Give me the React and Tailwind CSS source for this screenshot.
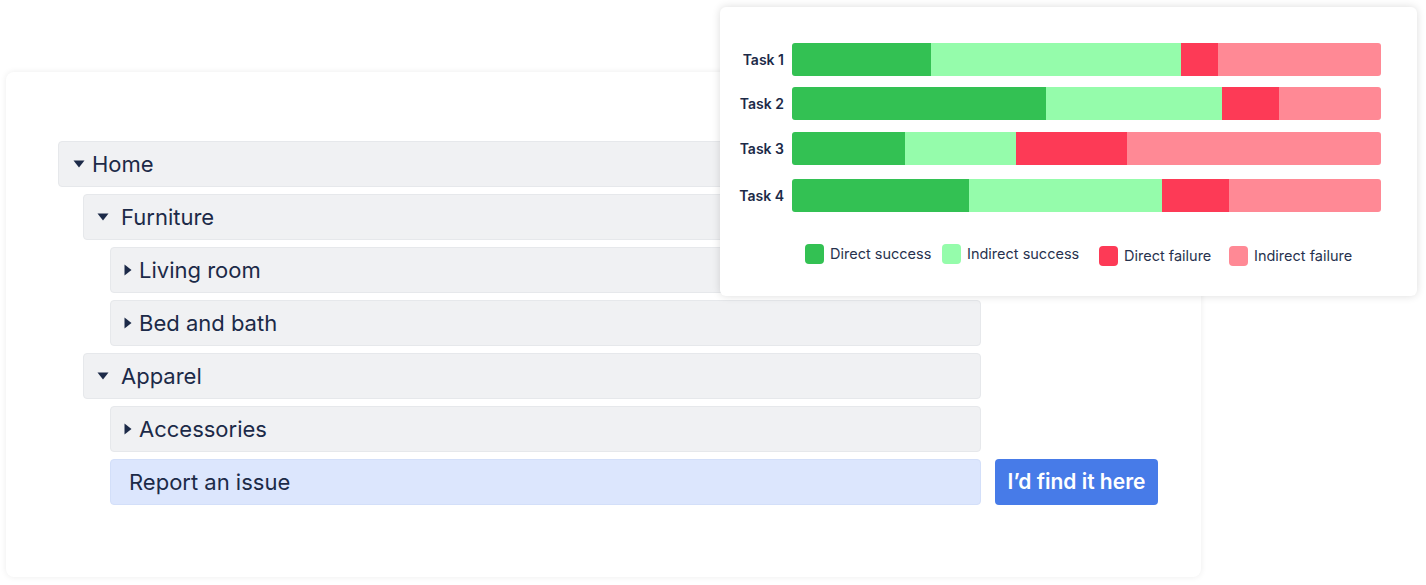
import React from "react";

const tasks = [
  { name: "Task 1", mt: "mt-0", seg: [139, 250, 37, 163] },
  { name: "Task 2", mt: "mt-[11px]", seg: [254, 176, 57, 102] },
  { name: "Task 3", mt: "mt-[12px]", seg: [113, 111, 111, 254] },
  { name: "Task 4", mt: "mt-[14px]", seg: [177, 193, 67, 152] },
];

const colors = ["bg-[#33c153]", "bg-[#95fcab]", "bg-[#fd3a56]", "bg-[#ff8995]"];

// fixed item widths keep the swatches where the reference has them
const legend = [
  { label: "Direct success", color: "bg-[#33c153]", cls: "w-[137px]" },
  { label: "Indirect success", color: "bg-[#95fcab]", cls: "w-[157px]" },
  { label: "Direct failure", color: "bg-[#fd3a56]", cls: "w-[130px] mt-[2px]" },
  { label: "Indirect failure", color: "bg-[#ff8995]", cls: "mt-[2px]" },
];

const Caret = ({ open }) =>
  open ? (
    <svg width="12" height="8" viewBox="0 0 12 8" className="shrink-0">
      <path d="M0.5 0.5 H11.5 L6 7.5 Z" fill="#1c2a48" />
    </svg>
  ) : (
    <svg width="8" height="12" viewBox="0 0 8 12" className="shrink-0">
      <path d="M0.5 0.5 V11.5 L7.5 6 Z" fill="#1c2a48" />
    </svg>
  );

const Row = ({ label, open, cls, pad, gap }) => (
  <div
    className={`flex items-center h-[46px] bg-[#f0f1f3] border border-[#e6e8eb] rounded-[4px] text-[22px] text-[#1c2a48] ${cls} ${pad}`}
  >
    <Caret open={open} />
    <span className={gap}>{label}</span>
  </div>
);

const ResultsChart = () => (
  <div className="absolute left-[720px] top-[7px] w-[697px] h-[289px] bg-white rounded-[6px] shadow-[0_0_8px_rgba(0,0,0,0.14)]">
    <div className="pt-[36px]">
      {tasks.map((t) => (
        <div key={t.name} className={`flex items-center ${t.mt}`}>
          <div className="w-[64px] text-right text-[14px] font-semibold text-[#1c2a48]">{t.name}</div>
          <div className="ml-[8px] flex h-[33px] w-[589px] rounded-[3px] overflow-hidden">
            {t.seg.map((w, i) => (
              <div key={i} className={`${colors[i]} h-full`} style={{ width: w }} />
            ))}
          </div>
        </div>
      ))}
    </div>
    <div className="flex items-start pl-[85px] mt-[31px]">
      {legend.map((l) => (
        <div key={l.label} className={`flex items-center shrink-0 ${l.cls}`}>
          <div className={`w-[19px] h-[20px] rounded-[4px] shrink-0 ${l.color}`} />
          <span className="ml-[6px] text-[14.5px] text-[#27324e] whitespace-nowrap">{l.label}</span>
        </div>
      ))}
    </div>
  </div>
);

export default function App() {
  return (
    <div
      className="relative w-[1426px] h-[585px] bg-white"
      style={{ fontFamily: "Inter, 'Noto Sans', sans-serif" }}
    >
      <div className="absolute left-[6px] top-[72px] w-[1195px] h-[505px] bg-white rounded-[8px] shadow-[0_0_6px_rgba(0,0,0,0.08)]">
        <div className="pl-[52px] pt-[69px] flex flex-col gap-[7px]">
          <Row label="Home" open cls="w-[923px]" pad="pl-[14px]" gap="ml-[7px]" />
          <Row label="Furniture" open cls="ml-[25px] w-[898px]" pad="pl-[13px]" gap="ml-[12px]" />
          <Row label="Living room" cls="ml-[52px] w-[871px]" pad="pl-[13px]" gap="ml-[7px]" />
          <Row label="Bed and bath" cls="ml-[52px] w-[871px]" pad="pl-[13px]" gap="ml-[7px]" />
          <Row label="Apparel" open cls="ml-[25px] w-[898px]" pad="pl-[13px]" gap="ml-[12px]" />
          <Row label="Accessories" cls="ml-[52px] w-[871px]" pad="pl-[13px]" gap="ml-[7px]" />
          <div className="flex ml-[52px]">
            <div className="flex items-center w-[871px] h-[46px] bg-[#dce6fd] border border-[#d3dff9] rounded-[4px] pl-[18px] text-[22px] text-[#1c2a48]">
              Report an issue
            </div>
            <button className="ml-[14px] w-[163px] h-[46px] rounded-[4px] bg-[#477be8] text-white text-[21px] font-semibold">
              I’d find it here
            </button>
          </div>
        </div>
      </div>
      <ResultsChart />
    </div>
  );
}
